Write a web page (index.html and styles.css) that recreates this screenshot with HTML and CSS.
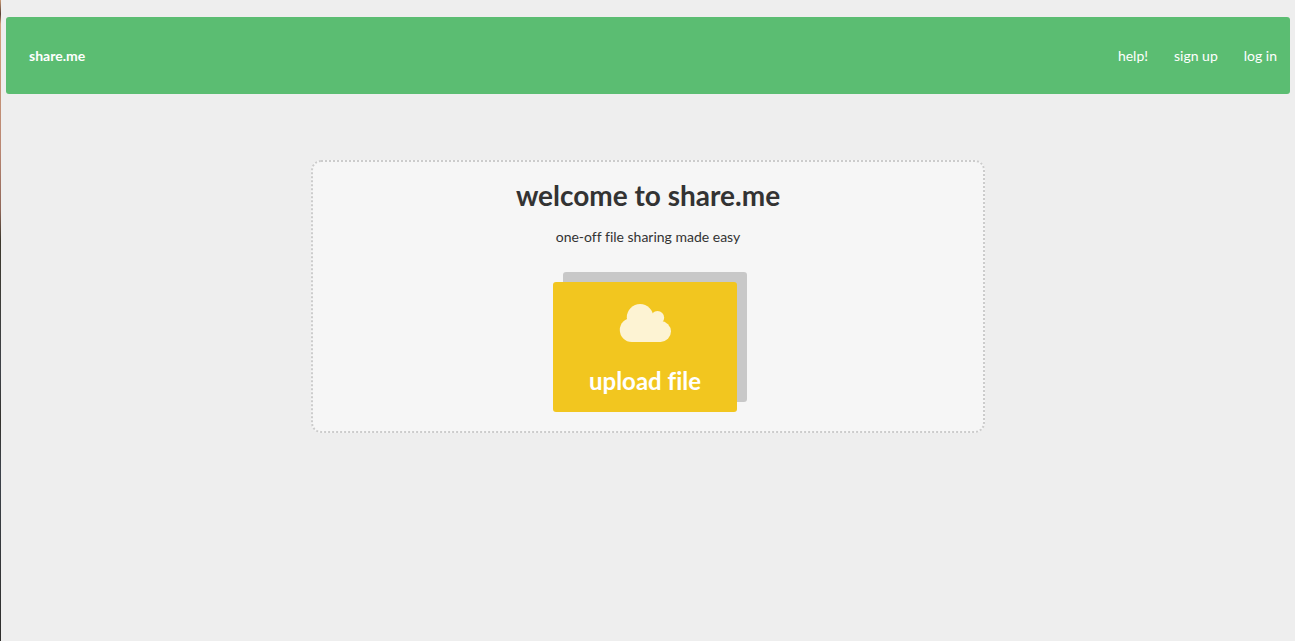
FILE: index.html
```html
<!DOCTYPE html>
<html lang="en">
<head>
<meta charset="utf-8">
<meta name="viewport" content="width=device-width, initial-scale=1">
<title>share.me</title>
<link rel="stylesheet" href="styles.css">
</head>
<body class="page">
<header class="navbar">
  <a class="brand" href="#">share.me</a>
  <nav class="nav-links">
    <a href="#">help!</a>
    <a href="#">sign up</a>
    <a href="#">log in</a>
  </nav>
</header>
<main class="welcome">
  <h1 class="title">welcome to share.me</h1>
  <p class="tagline">one-off file sharing made easy</p>
  <button class="upload" type="button">
    <svg class="cloud" viewBox="0 0 52 38" width="52" height="38" aria-hidden="true">
      <circle cx="21.1" cy="13.3" r="13.3"/>
      <circle cx="38.5" cy="13.7" r="6.7"/>
      <circle cx="12.8" cy="26" r="12"/>
      <circle cx="41.6" cy="27.5" r="10.4"/>
      <path d="M12.8 14h20l9 3v21h-29z"/>
    </svg>
    <span>upload file</span>
  </button>
</main>
</body>
</html>
```
FILE: styles.css
```css
* {
  box-sizing: border-box;
}

.page {
  margin: 0;
  min-height: 100vh;
  padding: 17px 5px 17px 6px;
  background: linear-gradient(#c89b78 0, #5a4034 14px, #d2a17c 24px, #b98672 150px, #8f6658 210px, #3c382c 240px, #3e4248 370px, #33312c 420px, #3c424a 470px, #2e2d2b 100%) 0 0 / 1px 100% no-repeat #eee;
  color: #333;
  font-family: Lato, "Liberation Sans", sans-serif;
  font-size: 14px;
  font-variant-ligatures: none;
  line-height: 21px;
}

.navbar {
  display: flex;
  align-items: center;
  justify-content: space-between;
  padding: 28px 13px 28px 23px;
  border-radius: 3px;
  background: #5bbd72;
}

.navbar a {
  color: #fff;
  text-decoration: none;
}

.brand {
  font-weight: 700;
}

.nav-links {
  display: flex;
  gap: 26px;
}

.welcome {
  display: flex;
  flex-direction: column;
  align-items: center;
  width: 52.5%;
  margin: 66px auto 0;
  padding: 15px 16px 19px;
  border: 2px dotted #ccc;
  border-radius: 10px;
  background: #f6f6f6;
  text-align: center;
}

.title {
  margin: 0 0 13px;
  font-size: 28px;
  line-height: 36px;
}

.tagline {
  margin: 0 0 35px;
}

.upload {
  display: flex;
  flex-direction: column;
  align-items: center;
  gap: 24px;
  margin: 0 6px 0 0;
  padding: 22px 36px 16px;
  border: 0;
  border-radius: 3px;
  background: #f2c61f;
  box-shadow: 10px -10px 0 #c8c8c8;
  color: #fff;
  font: 700 24px/30px Lato, "Liberation Sans", sans-serif;
  font-variant-ligatures: none;
  cursor: pointer;
}

.cloud {
  fill: #fdf3d3;
}
```
